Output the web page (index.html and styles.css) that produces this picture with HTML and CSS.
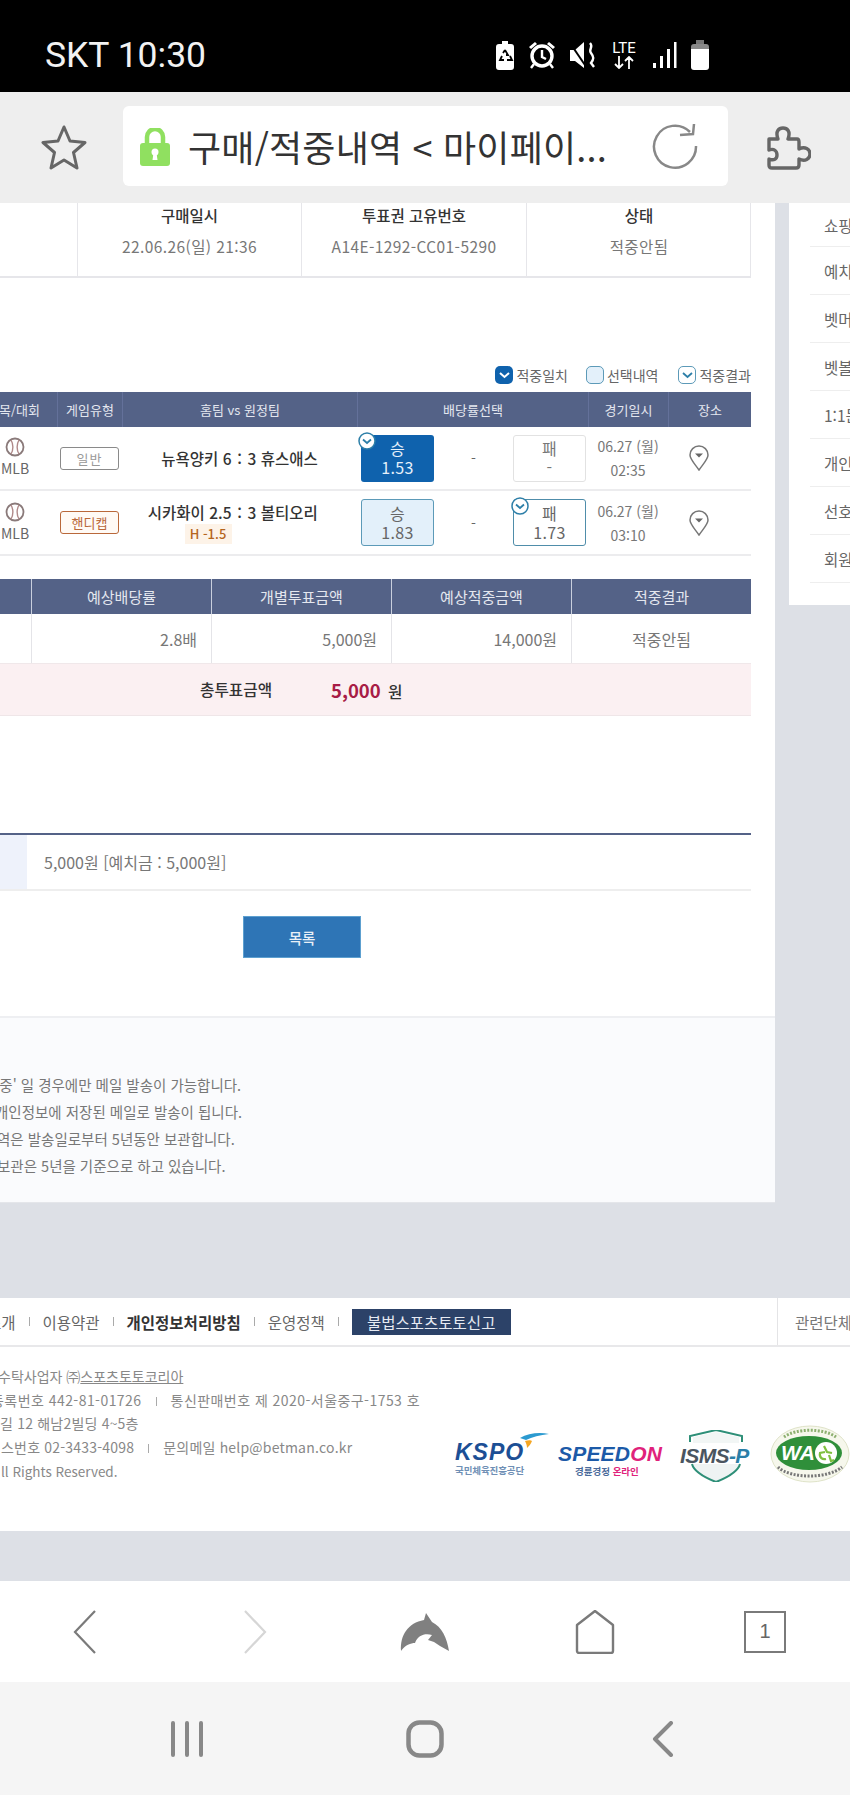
FILE: index.html
```html
<!DOCTYPE html>
<html lang="ko">
<head>
<meta charset="utf-8">
<title>구매/적중내역</title>
<link rel="stylesheet" href="styles.css">
</head>
<body>
<div class="screen">
  <header class="statusbar">
    <span class="clock">SKT 10:30</span>
    <div class="status-icons">
      <svg class="si" width="20" height="30" viewBox="0 0 20 30"><path d="M7 1h6v3h3a3 3 0 0 1 3 3v20a3 3 0 0 1-3 3H4a3 3 0 0 1-3-3V7a3 3 0 0 1 3-3h3z" fill="#fff"/><path d="M10 10l3 5h-2M7 16l-2 4h4M15 16l2 4h-5M8 13l2-3" fill="none" stroke="#000" stroke-width="1.8"/></svg>
      <svg class="si" width="28" height="30" viewBox="0 0 28 30"><circle cx="14" cy="16" r="10" fill="none" stroke="#fff" stroke-width="3.4"/><path d="M14 10v7l4 2" fill="none" stroke="#fff" stroke-width="2.4"/><path d="M1 7l6-5 2 2-6 5zM27 7l-6-5-2 2 6 5z" fill="#fff"/><path d="M6 24l-3 4M22 24l3 4" stroke="#fff" stroke-width="2.4"/></svg>
      <svg class="si" width="28" height="30" viewBox="0 0 28 30"><path d="M1 10h5l9-8v26l-9-7H1z" fill="#fff"/><path d="M1 3l17 25" stroke="#000" stroke-width="2"/><path d="M21 3c4 4-2 6 1 10s3 6 0 10l3 4" fill="none" stroke="#fff" stroke-width="2.4"/></svg>
      <div class="lte"><span class="lte-t">LTE</span><svg width="24" height="13" viewBox="0 0 24 13"><path d="M7 0v12M3 8l4 4 4-4M17 13V1M13 5l4-4 4 4" fill="none" stroke="#fff" stroke-width="1.8"/></svg></div>
      <svg class="si" width="26" height="28" viewBox="0 0 26 28"><path d="M2 22h3v5H2zM9 15h3v12H9zM16 8h3v19h-3zM23 1h2.500v26H23z" fill="#fff"/></svg>
      <svg class="si" width="20" height="30" viewBox="0 0 20 30"><path d="M6 0h8v4H6z" fill="#777"/><path d="M4 4h12a3 3 0 0 1 3 3v2H1V7a3 3 0 0 1 3-3z" fill="#888"/><path d="M1 9h18v18a3 3 0 0 1-3 3H4a3 3 0 0 1-3-3z" fill="#fff"/></svg>
    </div>
  </header>

  <div class="toolbar">
    <svg class="star" width="46" height="46" viewBox="0 0 46 46"><path d="M23 3l6 14 15 1.500-11.500 10L36 44l-13-8-13 8 3.500-15.500L2 18.500 17 17z" fill="none" stroke="#666" stroke-width="3" stroke-linejoin="round"/></svg>
    <div class="urlbar">
      <svg class="lock" width="30" height="38" viewBox="0 0 30 38"><path d="M7 16V9a8 8 0 0 1 16 0v7" fill="none" stroke="#90e060" stroke-width="4.500"/><rect y="15" width="30" height="23" rx="3" fill="#90e060"/><circle cx="15" cy="24" r="3.500" fill="#fff"/><path d="M13.500 25h3l1 7h-5z" fill="#fff"/></svg>
      <span class="url-title">구매/적중내역 &lt; 마이페이...</span>
      <svg class="reload" width="48" height="48" viewBox="0 0 48 48"><path d="M38 10A21 21 0 1 0 44 24" fill="none" stroke="#888" stroke-width="2.500"/><path d="M28 13L41 12 42 2" fill="none" stroke="#888" stroke-width="2.500"/></svg>
    </div>
    <svg class="puzzle" width="44" height="44" viewBox="0 0 44 44"><path d="M2 13h9c-3-8 1-11 5-11s8 3 5 11h9c2 0 2 2 2 3v7c6-3 11 0 11 5s-5 8-11 5v6c0 2-1 3-3 3H5c-2 0-3-1-3-3v-6c5 2 8 0 8-4s-3-7-8-5z" fill="none" stroke="#666" stroke-width="3.400" stroke-linejoin="round"/></svg>
  </div>

  <div class="page">
    <div class="columns">
      <main class="main">
        <section class="info">
          <div class="info-cell info-first"><b class="th-strong">투표권 정보</b><span>야구 승1패 46회차</span></div>
          <div class="info-cell"><b class="th-strong">구매일시</b><span>22.06.26(일) 21:36</span></div>
          <div class="info-cell"><b class="th-strong">투표권 고유번호</b><span>A14E-1292-CC01-5290</span></div>
          <div class="info-cell"><b class="th-strong">상태</b><span>적중안됨</span></div>
        </section>

        <div class="legend">
          <span class="lg-item"><i class="lg-box lg-solid"><svg width="11" height="8" viewBox="0 0 11 8"><path d="M1 2l4.500 4L10 2" fill="none" stroke="#fff" stroke-width="2"/></svg></i>적중일치</span>
          <span class="lg-item"><i class="lg-box lg-soft"></i>선택내역</span>
          <span class="lg-item"><i class="lg-box lg-line"><svg width="11" height="8" viewBox="0 0 11 8"><path d="M1 2l4.500 4L10 2" fill="none" stroke="#2d7fa8" stroke-width="1.800"/></svg></i>적중결과</span>
        </div>

        <section class="games">
          <div class="games-row games-head">
            <div>종목/대회</div><div>게임유형</div><div>홈팀 vs 원정팀</div><div>배당률선택</div><div>경기일시</div><div>장소</div>
          </div>
          <div class="games-row game game-a">
            <div class="league">
              <svg width="20" height="20" viewBox="0 0 20 20"><circle cx="10" cy="10" r="8.500" fill="#fff" stroke="#8a7a7a" stroke-width="1.800"/><path d="M6 3c2.500 4 2.500 10 0 14M14 3c-2.500 4-2.500 10 0 14" fill="none" stroke="#b08a8a" stroke-width="1.400"/></svg>
              <span>MLB</span>
            </div>
            <div class="type-cell"><span class="badge">일반</span></div>
            <div class="match"><div class="m-home">뉴욕양키 6</div><div class="m-colon">:</div><div>3 휴스애스</div></div>
            <div class="odds">
              <div class="odd odd-hit"><svg class="tick" width="18" height="18" viewBox="0 0 18 18"><circle cx="9" cy="9" r="8" fill="#fff" stroke="#2d7fa8" stroke-width="1.500"/><path d="M5 7.500l4 3.500 4-3.500" fill="none" stroke="#2d7fa8" stroke-width="1.800"/></svg><span>승</span><span>1.53</span></div>
              <div class="odd-dash">-</div>
              <div class="odd odd-plain"><span>패</span><span>-</span></div>
            </div>
            <div class="date"><span>06.27 (월)</span><span>02:35</span></div>
            <div class="pin-cell"><svg width="20" height="26" viewBox="0 0 20 26"><path d="M10 25C5 18 1 14 1 10a9 9 0 0 1 18 0c0 4-4 8-9 15z" fill="#fff" stroke="#777" stroke-width="1.500"/><path d="M6 8.500h8l-4 4z" fill="#666"/></svg></div>
          </div>
          <div class="games-row game game-b">
            <div class="league">
              <svg width="20" height="20" viewBox="0 0 20 20"><circle cx="10" cy="10" r="8.500" fill="#fff" stroke="#8a7a7a" stroke-width="1.800"/><path d="M6 3c2.500 4 2.500 10 0 14M14 3c-2.500 4-2.500 10 0 14" fill="none" stroke="#b08a8a" stroke-width="1.400"/></svg>
              <span>MLB</span>
            </div>
            <div class="type-cell"><span class="badge badge-hc">핸디캡</span></div>
            <div class="match"><div class="m-home">시카화이 2.5<span class="hc-chip">H -1.5</span></div><div class="m-colon">:</div><div>3 볼티오리</div></div>
            <div class="odds">
              <div class="odd odd-sel"><span>승</span><span>1.83</span></div>
              <div class="odd-dash">-</div>
              <div class="odd odd-res"><svg class="tick" width="18" height="18" viewBox="0 0 18 18"><circle cx="9" cy="9" r="8" fill="#fff" stroke="#2d7fa8" stroke-width="1.500"/><path d="M5 7.500l4 3.500 4-3.500" fill="none" stroke="#2d7fa8" stroke-width="1.800"/></svg><span>패</span><span>1.73</span></div>
            </div>
            <div class="date"><span>06.27 (월)</span><span>03:10</span></div>
            <div class="pin-cell"><svg width="20" height="26" viewBox="0 0 20 26"><path d="M10 25C5 18 1 14 1 10a9 9 0 0 1 18 0c0 4-4 8-9 15z" fill="#fff" stroke="#777" stroke-width="1.500"/><path d="M6 8.500h8l-4 4z" fill="#666"/></svg></div>
          </div>
        </section>

        <section class="summary">
          <div class="sum-row sum-head"><div></div><div>예상배당률</div><div>개별투표금액</div><div>예상적중금액</div><div>적중결과</div></div>
          <div class="sum-row sum-body"><div></div><div class="num">2.8배</div><div class="num">5,000원</div><div class="num">14,000원</div><div class="ctr">적중안됨</div></div>
          <div class="sum-total"><b class="tot-label">총투표금액</b><b class="tot-val"><em>5,000</em> 원</b></div>
        </section>

        <section class="paid">
          <div class="paid-label"></div>
          <div class="paid-val">5,000원 [예치금 : 5,000원]</div>
        </section>

        <div class="actions"><a class="btn-list">목록</a></div>

        <section class="notes">
          <p class="n1">적중' 일 경우에만 메일 발송이 가능합니다.</p>
          <p class="n2">개인정보에 저장된 메일로 발송이 됩니다.</p>
          <p class="n3">역은 발송일로부터 5년동안 보관합니다.</p>
          <p class="n4">보관은 5년을 기준으로 하고 있습니다.</p>
        </section>
      </main>

      <aside class="side">
        <div class="side-item">쇼핑찜</div>
        <div class="side-item">예치금</div>
        <div class="side-item">벳머니</div>
        <div class="side-item">벳볼</div>
        <div class="side-item">1:1문의</div>
        <div class="side-item">개인정보</div>
        <div class="side-item">선호</div>
        <div class="side-item">회원탈퇴</div>
      </aside>
    </div>

    <footer class="footer">
      <nav class="fnav">
        <span class="fn-clip">소개</span><i class="fsep"></i>
        <span>이용약관</span><i class="fsep"></i>
        <b>개인정보처리방침</b><i class="fsep"></i>
        <span>운영정책</span><i class="fsep"></i>
        <span class="report">불법스포츠토토신고</span>
        <span class="related">관련단체</span>
      </nav>
      <div class="fbody">
        <div class="ftext">
          <p class="f1">수탁사업자 ㈜<u>스포츠토토코리아</u></p>
          <p class="f2">등록번호 442-81-01726<i class="fsep-t"></i>통신판매번호 제 2020-서울중구-1753 호</p>
          <p class="f3">길 12 해남2빌딩 4~5층</p>
          <p class="f4">스번호 02-3433-4098<i class="fsep-t"></i>문의메일 help@betman.co.kr</p>
          <p class="f5">ll Rights Reserved.</p>
        </div>
        <div class="logos">
          <div class="lg lg-kspo">
            <svg class="kspo-mark" width="32" height="18" viewBox="0 0 32 18"><path d="M2 6C10 1 22 0 31 2 22 3 14 5 8 8z" fill="#2b9ad0"/><path d="M7 9c3-1 6-1 7 0-1 3-3 5-5 7 0-3-1-5-2-7z" fill="#f5a623"/></svg>
            <strong>KSPO</strong><small>국민체육진흥공단</small>
          </div>
          <div class="lg lg-speed">
            <strong>SPEED<span class="pink">ON</span></strong><small>경륜경정 <span class="pink">온라인</span></small>
          </div>
          <div class="lg lg-isms">
            <svg width="72" height="52" viewBox="0 0 72 52"><path d="M10 12V6L36 0l26 6v6" fill="none" stroke="#2e8f78" stroke-width="2"/><path d="M12 34c2 8 14 14 24 18 10-4 22-10 24-18" fill="#eef3f3" stroke="#2e8f78" stroke-width="2"/><path d="M13 13V7l23-5 23 5v6z" fill="#f2f6f5"/></svg>
            <strong>ISMS<span class="isms-p">-P</span></strong>
          </div>
          <div class="lg lg-wa">
            <svg width="80" height="58" viewBox="0 0 80 58"><ellipse cx="40" cy="29" rx="39" ry="28" fill="#f6f7ec" stroke="#dfe3c8"/><ellipse cx="39" cy="28" rx="33" ry="17" fill="#2f8f3a"/><circle cx="56" cy="28" r="11" fill="#fff"/><path d="M54 21l3 6 5 1M55 27l-5 1c-1 4 2 7 6 6M59 30l2 6 3-1" fill="none" stroke="#7fbf3f" stroke-width="2.200"/><path d="M8 42c12 12 50 12 64 0" fill="none" stroke="#777" stroke-width="3" stroke-dasharray="2 1.500"/><path d="M14 12c12-9 40-9 52 0" fill="none" stroke="#8db070" stroke-width="3" stroke-dasharray="2 1.500"/></svg>
            <strong>WA</strong>
          </div>
        </div>
      </div>
    </footer>
  </div>

  <nav class="browser-nav">
    <svg width="24" height="44" viewBox="0 0 24 44"><path d="M22 1L2 22l20 21" fill="none" stroke="#7a7a7a" stroke-width="2.200"/></svg>
    <svg width="24" height="44" viewBox="0 0 24 44"><path d="M2 1l20 21L2 43" fill="none" stroke="#d6d6d6" stroke-width="2.200"/></svg>
    <svg width="50" height="38" viewBox="0 0 50 38"><path d="M1 38C0 22 8 10 24 7L26 0l6 9c10 5 15 16 17 29l-9-5-6-4-6-2 4-5c-7-2-14 0-17 8-4 0-10 2-14 8z" fill="#808080"/></svg>
    <svg width="40" height="44" viewBox="0 0 40 44"><path d="M2 15L20 1l18 14v26c0 1-1 2-2 2H4c-1 0-2-1-2-2z" fill="none" stroke="#7a7a7a" stroke-width="2.400" stroke-linejoin="round"/></svg>
    <div class="tabbox">1</div>
  </nav>
  <nav class="sys-nav">
    <svg width="34" height="36" viewBox="0 0 34 36"><path d="M3 2v32M17 2v32M31 2v32" stroke="#888" stroke-width="4" stroke-linecap="round"/></svg>
    <svg width="38" height="38" viewBox="0 0 38 38"><rect x="2.500" y="2.500" width="33" height="33" rx="11" fill="none" stroke="#888" stroke-width="4.500"/></svg>
    <svg width="22" height="36" viewBox="0 0 22 36"><path d="M19 2L3 18l16 16" fill="none" stroke="#888" stroke-width="4" stroke-linecap="round" stroke-linejoin="round"/></svg>
  </nav>
</div>
</body>
</html>
```

FILE: styles.css
```css
* { box-sizing: border-box; }
html, body { margin: 0; padding: 0; }
body { font-family: "Noto Sans CJK KR", "Noto Sans", sans-serif; color: #666; }
p { margin: 0; }
i, em { font-style: normal; }
.screen { width: 850px; height: 1795px; display: flex; flex-direction: column; overflow: hidden; background: #dde0e6; }

.statusbar { height: 92px; flex: none; background: #000; display: flex; align-items: center; padding: 18px 140px 0 45px; justify-content: space-between; }
.clock { font-family: Roboto, sans-serif; color: #f2f2f2; font-size: 35.500px; line-height: 40px; }
.status-icons { display: flex; align-items: center; gap: 13px; }
.si { display: block; }
.lte { display: flex; flex-direction: column; align-items: center; width: 28px; }
.lte-t { font-family: Roboto, sans-serif; font-size: 15px; line-height: 15px; color: #fff; }

.toolbar { height: 111px; flex: none; background: #eeeeee; display: flex; align-items: center; padding-left: 41px; position: relative; z-index: 2; }
.star { flex: none; margin-right: 36px; margin-top: -2px; }
.urlbar { width: 605px; height: 80px; background: #fff; border-radius: 6px; display: flex; align-items: center; padding-left: 17px; margin-top: -3px; }
.lock { flex: none; margin-right: 18px; margin-top: 2px; }
.url-title { font-size: 36px; line-height: 50px; color: #333; width: 465px; white-space: nowrap; letter-spacing: .2px; }
.reload { flex: none; margin-left: -1px; }
.puzzle { flex: none; margin-left: 39px; }

.page { flex: 1; display: flex; flex-direction: column; min-height: 0; }
.columns { display: flex; height: 1000px; flex: none; }
.main { width: 775px; flex: none; background: #fff; display: flex; flex-direction: column; overflow: hidden; border-bottom: 1px solid #e4e6ea; }

.info { display: grid; grid-template-columns: 77px 224px 225px 225px; width: 751px; height: 75px; border-bottom: 2px solid #e6e6ea; flex: none; border-right: 1px solid #e6e6ea; }
.info-cell { border-left: 1px solid #e6e6ea; display: flex; flex-direction: column; align-items: center; font-size: 15.500px; color: #777; padding-top: 1px; letter-spacing: .4px; }
.info-cell b { font-weight: 500; color: #333; line-height: 22px; font-size: 15.500px; letter-spacing: 0; }
.info-cell span { line-height: 22px; margin-top: 9px; white-space: nowrap; }
.info-first { border-left: 0; overflow: hidden; align-items: flex-end; padding-right: 63px; }
.info-first b { visibility: hidden; }

.legend { display: flex; justify-content: flex-end; gap: 18px; width: 751px; margin-top: 87px; height: 20px; flex: none; font-size: 14px; color: #666; }
.lg-item { display: flex; align-items: center; gap: 3px; line-height: 20px; white-space: nowrap; }
.lg-item:last-child { margin-left: 2px; }
.lg-box { width: 18px; height: 18px; border-radius: 5px; display: flex; align-items: center; justify-content: center; }
.lg-solid { background: #0f62ad; }
.lg-soft { background: #e3f0fa; border: 1.500px solid #5c9ab8; }
.lg-line { background: #fff; border: 1.500px solid #5c9ab8; }

.games { width: 751px; margin-top: 7px; flex: none; }
.games-row { display: grid; grid-template-columns: 57px 65px 235px 231px 80px 83px; }
.games-head { height: 35px; background: #546287; color: #e4e7ef; font-size: 13px; }
.games-head > div { display: flex; align-items: center; justify-content: center; border-left: 1px solid #64719a; white-space: nowrap; }
.games-head > div:first-child { border-left: 0; justify-content: flex-end; padding-right: 17px; }
.game { border-bottom: 2px solid #ececee; align-items: center; }
.game-a { height: 64px; }
.game-b { height: 65px; }
.league { display: flex; flex-direction: column; align-items: center; width: 30px; font-size: 14px; line-height: 18px; color: #666; gap: 2px; margin-top: -2px; }
.league svg { display: block; }
.type-cell { display: flex; justify-content: center; }
.badge { width: 59px; height: 23px; border: 1.500px solid #8a8a8a; border-radius: 3px; display: flex; align-items: center; justify-content: center; font-size: 13px; color: #999; letter-spacing: 1px; }
.badge-hc { border-color: #b9683a; color: #b9683a; background: #fffaf5; letter-spacing: 0; }
.match { display: grid; grid-template-columns: 1fr 16px 1fr; font-size: 15.500px; font-weight: 500; color: #333; line-height: 22px; white-space: nowrap; }
.game-b .match { align-self: start; padding-top: 10px; }
.m-home { text-align: right; }
.m-colon { text-align: center; }
.hc-chip { display: block; margin-left: auto; margin-top: 1px; width: 47px; height: 20px; line-height: 20px; text-align: center; background: #fdf3e8; color: #b5651d; font-size: 13px; }
.odds { display: grid; grid-template-columns: 73px 79px 73px; padding-left: 4px; }
.odd { position: relative; height: 47px; border-radius: 3px; display: flex; flex-direction: column; align-items: center; justify-content: center; font-size: 16px; line-height: 19px; color: #666; letter-spacing: .3px; }
.odd span { display: block; }
.odd-hit { background: #0f62ad; color: #e6f0fa; }
.odd-sel { background: #e3f0fa; border: 1.500px solid #5c9ab8; }
.odd-res { background: #fff; border: 1.500px solid #4f8daa; }
.odd-plain { background: #fff; border: 1px solid #e2e2e2; color: #777; }
.odd-dash { display: flex; align-items: center; justify-content: center; font-size: 14px; color: #666; }
.tick { position: absolute; left: -3px; top: -3px; }
.date { display: flex; flex-direction: column; align-items: center; font-size: 14px; line-height: 24px; color: #777; }
.pin-cell { display: flex; justify-content: center; padding-right: 22px; }
.pin-cell svg { display: block; }

.summary { width: 751px; margin-top: 23px; flex: none; }
.sum-row { display: grid; grid-template-columns: 31px 180px 180px 180px 180px; }
.sum-head { height: 35px; background: #546287; color: #e4e7ef; font-size: 15px; }
.sum-head > div { display: flex; align-items: center; justify-content: center; border-left: 1px solid #c9cfdd; }
.sum-head > div:first-child { border-left: 0; }
.sum-body { height: 49px; font-size: 16px; color: #777; }
.sum-body > div { display: flex; align-items: center; border-left: 1px solid #e4e4e8; }
.sum-body > div:first-child { border-left: 0; }
.num { justify-content: flex-end; padding-right: 14px; }
.ctr { justify-content: center; }
.sum-total { height: 53px; background: #fbf0f2; border-top: 1px solid #f0e8ea; border-bottom: 1px solid #efe6e8; display: flex; align-items: center; padding-left: 200px; }
.tot-label { font-size: 15.700px; font-weight: 500; color: #333; width: 131px; }
.tot-val { font-size: 15.700px; font-weight: 500; color: #333; }
.tot-val em { color: #a81c46; font-size: 18.500px; font-weight: 700; margin-right: 3px; }

.paid { width: 751px; margin-top: 117px; height: 58px; border-top: 2px solid #546287; border-bottom: 2px solid #eeeeee; display: flex; flex: none; }
.paid-label { width: 27px; background: #eef2fb; }
.paid-val { padding-left: 17px; font-size: 16px; color: #777; display: flex; align-items: center; }

.actions { padding: 25px 0 0 243px; flex: none; }
.btn-list { width: 118px; height: 42px; background: #2e75b6; border: 1px solid #5da0d0; color: #e9f0f7; font-size: 14.500px; font-weight: 500; display: flex; align-items: center; justify-content: center; }

.notes { margin-top: 58px; flex: 1; background: #fafbfd; border-top: 2px solid #eeeff2; padding-top: 53px; font-size: 14.500px; color: #777; line-height: 27px; white-space: nowrap; }
.n1 { margin-left: -14px; }
.n2 { margin-left: -5px; }
.n3 { margin-left: -3px; }
.n4 { margin-left: -3px; }

.side { margin-left: 14px; height: 402px; width: 80px; flex: none; background: #fff; padding-left: 21px; overflow: hidden; white-space: nowrap; }
.side-item { height: 48px; border-bottom: 1px solid #eeeeee; font-size: 15.500px; color: #666; display: flex; align-items: center; padding-left: 14px; }
.side-item:first-child { height: 44px; }

.footer { margin-top: 95px; height: 233px; background: #fff; flex: none; }
.fnav { height: 49px; border-bottom: 2px solid #e8e8ea; display: flex; align-items: center; font-size: 15.500px; color: #666; white-space: nowrap; position: relative; }
.fnav b { font-weight: 700; color: #333; }
.fn-clip { margin-left: -13px; }
.fsep { width: 1px; height: 9px; background: #aaa; margin: 0 13px; }
.report { background: #2c4268; color: #e6eaf2; height: 26px; width: 159px; display: flex; align-items: center; justify-content: center; }
.related { position: absolute; left: 777px; top: 0; height: 47px; border-left: 1px solid #e4e4e6; padding-left: 17px; display: flex; align-items: center; color: #777; }
.fbody { display: flex; justify-content: space-between; height: 184px; }
.ftext { font-size: 14px; line-height: 23.700px; color: #888; padding-top: 18px; white-space: nowrap; letter-spacing: .45px; }
.ftext u { text-decoration-thickness: 1px; }
.fsep-t { display: inline-block; width: 1px; height: 9px; background: #aaa; margin: 0 14px; }
.f1 { margin-left: -2px; letter-spacing: 0; }
.f2 { margin-left: -9px; }
.f3 { letter-spacing: .2px; }
.f4 { margin-left: 1px; letter-spacing: .2px; }
.f5 { margin-left: 1px; letter-spacing: 0; font-size: 13.500px; }
.logos { position: absolute; left: 455px; margin-top: 81px; display: flex; align-items: flex-start; }
.lg { position: relative; flex: none; }
.lg strong { font-family: "Liberation Sans", sans-serif; font-style: italic; font-weight: 700; display: block; }
.lg small { display: block; font-size: 9.500px; font-weight: 700; text-align: left; line-height: 12px; white-space: nowrap; }
.pink { color: #e0227b; }
.lg-kspo { width: 103px; color: #1c4f95; padding-top: 13px; }
.lg-kspo strong { font-size: 23px; line-height: 23px; letter-spacing: 1px; }
.lg-kspo small { color: #6f8fb5; letter-spacing: -.1px; }
.kspo-mark { position: absolute; left: 63px; top: 4px; }
.lg-speed { width: 122px; color: #1c5aa8; padding-top: 15px; }
.lg-speed strong { font-size: 21px; line-height: 22px; white-space: nowrap; letter-spacing: .2px; }
.lg-speed small { padding-left: 17px; color: #4a6a9a; }
.lg-isms { width: 90px; height: 52px; margin-top: 2px; }
.lg-isms svg { display: block; }
.lg-isms strong { position: absolute; left: 0; top: 13px; font-size: 21px; line-height: 26px; color: #4a5560; white-space: nowrap; letter-spacing: -.6px; }
.isms-p { color: #2b7fa8; }
.lg-wa { width: 80px; margin-top: -3px; }
.lg-wa svg { display: block; }
.lg-wa strong { position: absolute; left: 11px; top: 16px; font-size: 21px; line-height: 24px; color: #fff; }

.browser-nav { margin-top: auto; height: 101px; flex: none; background: #fff; display: grid; grid-template-columns: repeat(5, 170px); justify-items: center; align-items: center; }
.tabbox { width: 42px; height: 42px; border: 2.500px solid #7a7a7a; display: flex; align-items: center; justify-content: center; font-family: "Liberation Sans", sans-serif; font-size: 20px; color: #666; }
.sys-nav { height: 113px; flex: none; background: #f5f5f5; display: grid; grid-template-columns: repeat(3, 238px); justify-content: center; justify-items: center; align-items: center; }
```
